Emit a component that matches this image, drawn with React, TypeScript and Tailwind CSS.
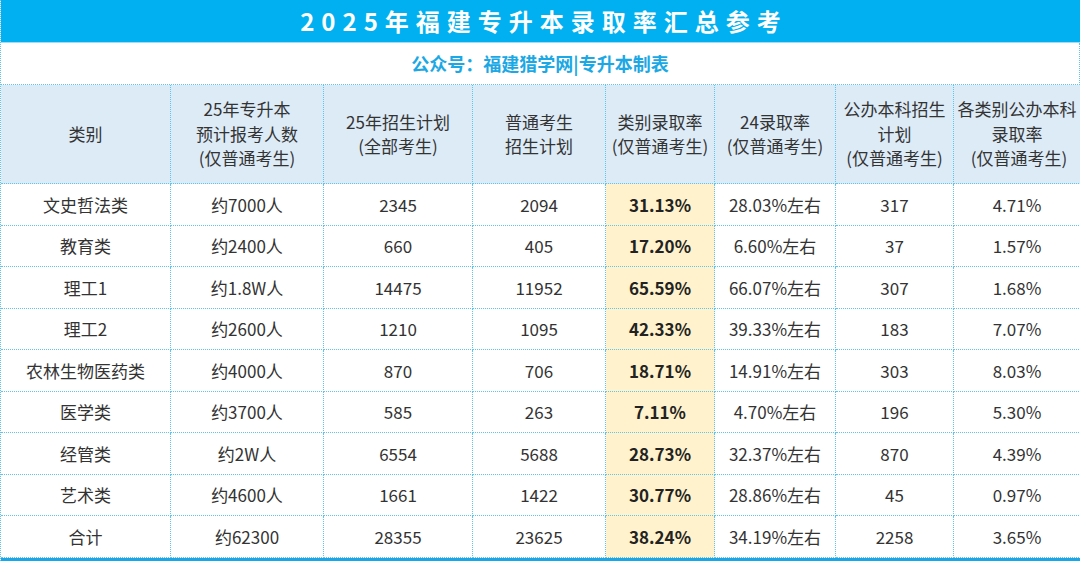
const headers = [
  ["类别"],
  ["25年专升本", "预计报考人数", "(仅普通考生)"],
  ["25年招生计划", "(全部考生)"],
  ["普通考生", "招生计划"],
  ["类别录取率", "(仅普通考生)"],
  ["24录取率", "(仅普通考生)"],
  ["公办本科招生", "计划", "(仅普通考生)"],
  ["各类别公办本科", "录取率", " (仅普通考生)"],
];

const rows = [
  ["文史哲法类", "约7000人", "2345", "2094", "31.13%", "28.03%左右", "317", "4.71%"],
  ["教育类", "约2400人", "660", "405", "17.20%", "6.60%左右", "37", "1.57%"],
  ["理工1", "约1.8W人", "14475", "11952", "65.59%", "66.07%左右", "307", "1.68%"],
  ["理工2", "约2600人", "1210", "1095", "42.33%", "39.33%左右", "183", "7.07%"],
  ["农林生物医药类", "约4000人", "870", "706", "18.71%", "14.91%左右", "303", "8.03%"],
  ["医学类", "约3700人", "585", "263", "7.11%", "4.70%左右", "196", "5.30%"],
  ["经管类", "约2W人", "6554", "5688", "28.73%", "32.37%左右", "870", "4.39%"],
  ["艺术类", "约4600人", "1661", "1422", "30.77%", "28.86%左右", "45", "0.97%"],
  ["合计", "约62300", "28355", "23625", "38.24%", "34.19%左右", "2258", "3.65%"],
];

const cols = "grid grid-cols-[170px_153px_149px_133px_109px_121px_118px_127px]";
const cell = "flex items-center justify-center border-r border-b border-dotted border-[#5cc6ee]";

export default function App() {
  return (
    <div
      className="w-[1080px] h-[561px] overflow-hidden bg-white text-[#333] border-l border-dotted border-[#5cc6ee]"
      style={{ fontFamily: '"Noto Sans CJK SC", "Noto Sans", sans-serif' }}
    >
      <div className="h-[43px] bg-[#00b0f0] flex items-center justify-center pl-[7px] border-b border-[#9fdcf5]">
        <span className="text-white text-[24px] font-bold tracking-[7px] leading-none">
          2025年福建专升本录取率汇总参考
        </span>
      </div>
      <div className="h-[42px] flex items-center justify-center border-b border-r border-dotted border-[#5cc6ee]">
        <span className="text-[#1ba8e4] text-[18px] font-bold">公众号：福建猎学网|专升本制表</span>
      </div>
      <div className={cols}>
        {headers.map((lines, i) => (
          <div key={i} className={`${cell} h-[99px] bg-[#ddebf7] flex-col text-[17px] leading-[24.5px] whitespace-pre`}>
            {lines.map((l) => (
              <span key={l}>{l}</span>
            ))}
          </div>
        ))}
        {rows.map((r) =>
          r.map((v, j) => (
            <div
              key={r[0] + j}
              className={`${cell} h-[41.5px] text-[17px] ${
                j === 4 ? "bg-[#fff2cc] font-bold text-[#222]" : ""
              }`}
            >
              {v}
            </div>
          ))
        )}
      </div>
      <div className="h-[4px] bg-[#1aa7e8]" />
    </div>
  );
}
